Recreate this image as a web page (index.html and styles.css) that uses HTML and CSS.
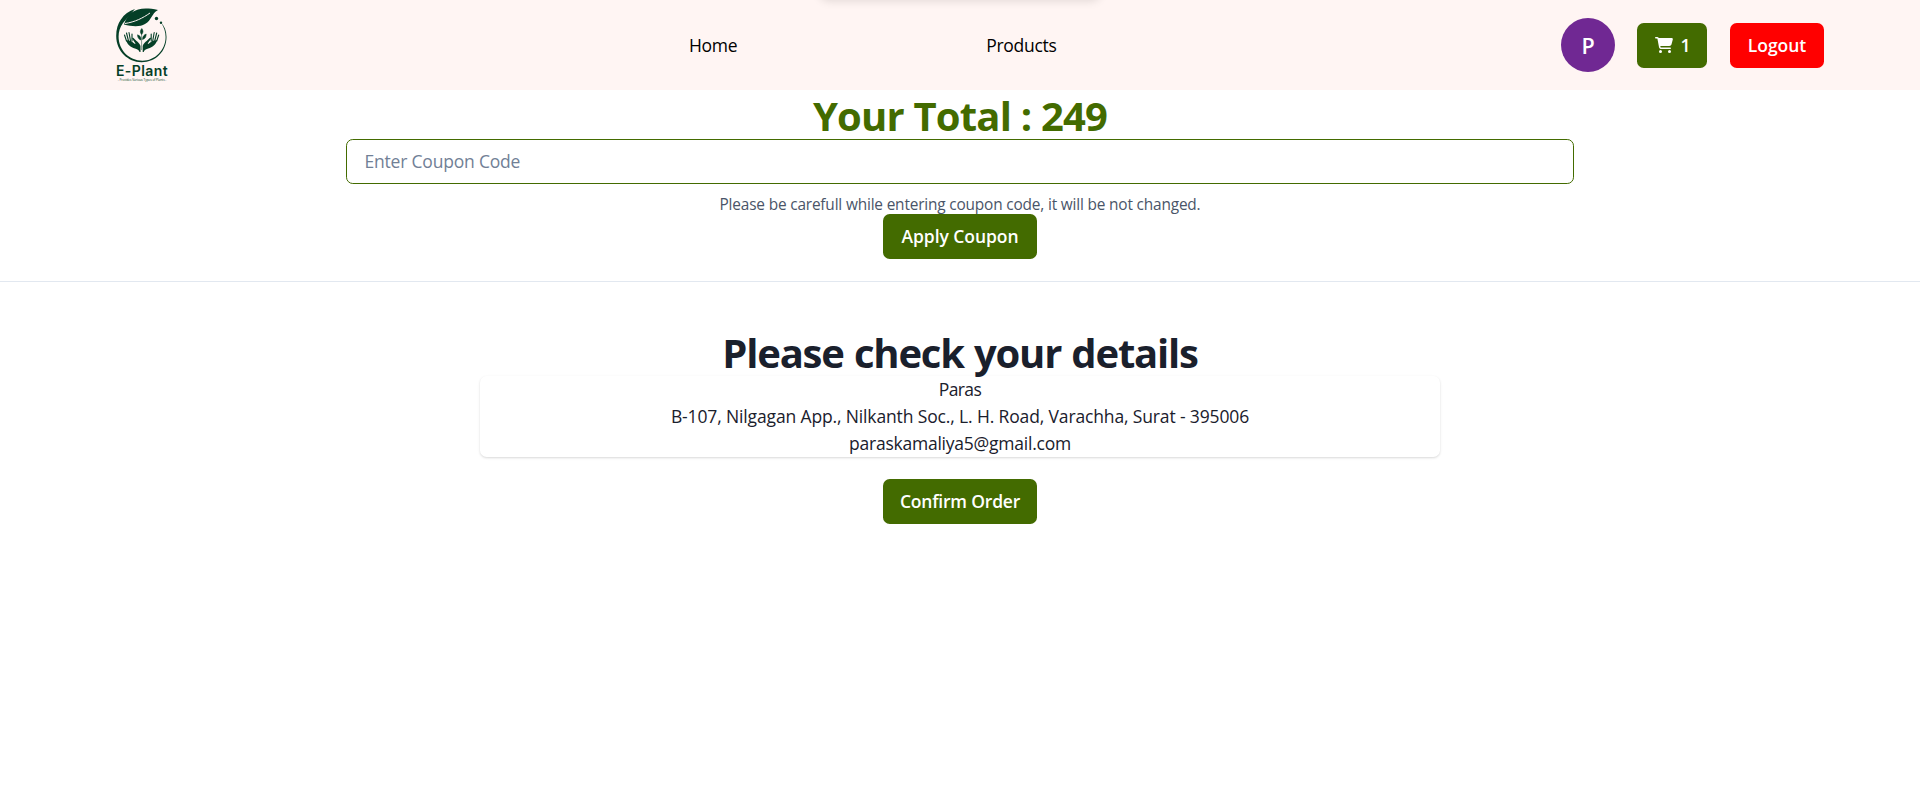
FILE: index.html
```html
<!DOCTYPE html>
<html lang="en">
<head>
<meta charset="utf-8">
<title>E-Plant</title>
<link rel="stylesheet" href="styles.css">
</head>
<body>
<header class="navbar">
  <div class="overlay-shadow"></div>
  <a class="brand">
    <svg class="brand-mark" viewBox="0 0 54 58" width="54" height="58">
      <path d="M20 3C8 7 1.200 17 1.200 30C1.200 45 13 56.200 26.500 56.200C41 56.200 51.500 45 51.500 31C51.500 25 49.500 20 46 16.500C49 21 50.600 26 50.600 31C50.600 44 40 54.700 27.500 54.700C14 54.700 3.600 44 3.600 30.500C3.600 26 5 21 8 17Z" fill="#053f27"/>
      <path d="M9 18.500C14 4 24 0 43 4C36 8 37 14 30 18C25 21 17 20.500 9 18.500Z" fill="#053f27"/>
      <path d="M10 17.500C20 16 28 12 35 7" fill="none" stroke="#fff5f3" stroke-width="1"/>
      <circle cx="41.500" cy="12.500" r="1.700" fill="#053f27"/><circle cx="46" cy="16.800" r="1.200" fill="#053f27"/>
      <g id="hand" fill="#053f27">
        <path d="M25.500 46V40C24.500 36.500 21 35 18.500 32C17.500 31.200 16.800 32 17.400 33L20.500 37.500L20 38L16 35L11 34C12.500 39 15.500 41 20 42.500C23 43.500 24.200 44.500 24.500 46Z"/>
        <path d="M11.500 35L9.500 29M13.500 35L11.500 27M15.500 35L14 26.500M17 35L17 28" stroke="#053f27" stroke-width="1.100" stroke-linecap="round"/>
      </g>
      <use href="#hand" transform="matrix(-1 0 0 1 53.200 0)"/>
      <path d="M26.600 44V27M26.600 28.500C24.800 26.500 25 24.500 26.800 22.500C28.400 24.500 28.500 26.500 26.600 28.500ZM26 34C24 33.500 22.500 32 22.500 28.800C25 29.800 26.200 31 26 34ZM27.500 33.500C27.500 30.500 28.800 29 31.200 28C31.200 31 30 33 27.500 33.500Z" fill="#053f27" stroke="#053f27" stroke-width=".5"/>
    </svg>
    <span class="brand-name">E-Plant</span>
    <span class="brand-tag">- Provides Various Types of Plants -</span>
  </a>
  <nav class="links"><a>Home</a><a>Products</a></nav>
  <div class="actions">
    <span class="avatar">P</span>
    <button class="btn cart"><svg viewBox="0 0 576 512" width="18" height="16"><path fill="currentColor" d="M0 24C0 10.700 10.700 0 24 0H69.500c22 0 41.500 12.800 50.600 32h411c26.300 0 45.500 25 38.600 50.400l-41 152.300c-8.500 31.400-37 53.300-69.500 53.300H170.700l5.400 28.500c2.200 11.300 12.100 19.500 23.600 19.500H488c13.300 0 24 10.700 24 24s-10.700 24-24 24H199.700c-34.600 0-64.300-24.600-70.700-58.500L77.400 54.500C76.700 50.700 73.400 48 69.500 48H24C10.700 48 0 37.300 0 24zM128 464a48 48 0 1 1 96 0a48 48 0 1 1-96 0zM464 416a48 48 0 1 1 0 96a48 48 0 1 1 0-96z"/></svg><span>1</span></button>
    <button class="btn logout">Logout</button>
  </div>
</header>
<section class="coupon">
  <h2 class="heading total">Your Total : 249</h2>
  <input class="field" placeholder="Enter Coupon Code">
  <p class="help">Please be carefull while entering coupon code, it will be not changed.</p>
  <button class="btn wide">Apply Coupon</button>
</section>
<hr class="divider">
<section class="details">
  <h2 class="heading check">Please check your details</h2>
  <div class="card">
    <p class="name">Paras</p>
    <p class="address">B-107, Nilgagan App., Nilkanth Soc., L. H. Road, Varachha, Surat - 395006</p>
    <p class="mail">paraskamaliya5@gmail.com</p>
  </div>
  <button class="btn wide confirm">Confirm Order</button>
</section>
</body>
</html>
```
FILE: styles.css
```css
* { box-sizing: border-box; }
html { font-size: 18px; }
body { margin: 0; background: #fff; color: #1a202c; font-family: "Open Sans", "Noto Sans", sans-serif; font-size: 17.5px; line-height: 27px; }
h2, p { margin: 0; }
.navbar { position: relative; height: 90px; background: #fff5f3; display: grid; grid-template-columns: 689px 1fr auto; align-items: center; padding-right: 96px; color: #000; }
.overlay-shadow { position: absolute; left: 820px; top: -20px; width: 280px; height: 19px; border-radius: 8px; box-shadow: 0 2px 10px rgba(0, 0, 0, .12); }
.brand { width: 54px; height: 80px; margin-left: 115px; display: flex; flex-direction: column; align-items: center; color: #053f27; }
.brand-mark { flex: none; margin-top: 1px; }
.brand-name { font: 600 14px/14px Inter, sans-serif; letter-spacing: .4px; white-space: nowrap; }
.brand-tag { font: 3px/4px "Open Sans", sans-serif; white-space: nowrap; }
.links { display: flex; gap: 249px; letter-spacing: -.3px; }
.actions { display: flex; align-items: center; }
.avatar { width: 54px; height: 54px; border-radius: 50%; background: #702893; color: #fff; font-size: 21.5px; font-weight: 600; display: grid; place-items: center; }
.btn { height: 45px; border: 0; border-radius: 6.75px; background: #436b00; color: #fff; font: 600 17.5px/22px "Open Sans", "Noto Sans", sans-serif; letter-spacing: -.05px; padding: 0 0 1px; display: flex; align-items: center; justify-content: center; white-space: nowrap; }
.cart { width: 70px; margin-left: 22px; gap: 8px; padding-left: 1px; }
.logout { width: 94px; margin-left: 23px; background: #f00; }
.coupon { display: flex; flex-direction: column; align-items: center; }
.heading { height: 48.6px; font-size: 40px; line-height: 51.6px; font-weight: 700; white-space: nowrap; }
.total { color: #436b00; letter-spacing: -.8px; }
.check { letter-spacing: -1.2px; word-spacing: 1px; }
.field { width: 1228px; height: 45px; border: 1px solid #436b00; border-radius: 6.75px; padding: 0 17.5px; font: 17.5px "Open Sans", "Noto Sans", sans-serif; letter-spacing: -.2px; background: #fff; outline: 0; }
.field::placeholder { color: #718096; opacity: 1; }
.help { margin-top: 9px; height: 21.4px; font-size: 15.4px; line-height: 23px; letter-spacing: -.17px; color: #4a5568; }
.wide { width: 154px; }
.confirm { letter-spacing: -.2px; }
.divider { margin: 22px 0 0; border: 0; height: 1px; background: #e2e8f0; }
.details { padding-top: 45px; display: flex; flex-direction: column; align-items: center; }
.card { width: 960px; text-align: center; border-radius: 6.75px; box-shadow: 0 1px 3px rgba(0, 0, 0, .1), 0 1px 2px rgba(0, 0, 0, .06); margin-bottom: 22px; }
.name { letter-spacing: -.6px; }
.address { letter-spacing: -.14px; }
.mail { letter-spacing: -.23px; }
```
